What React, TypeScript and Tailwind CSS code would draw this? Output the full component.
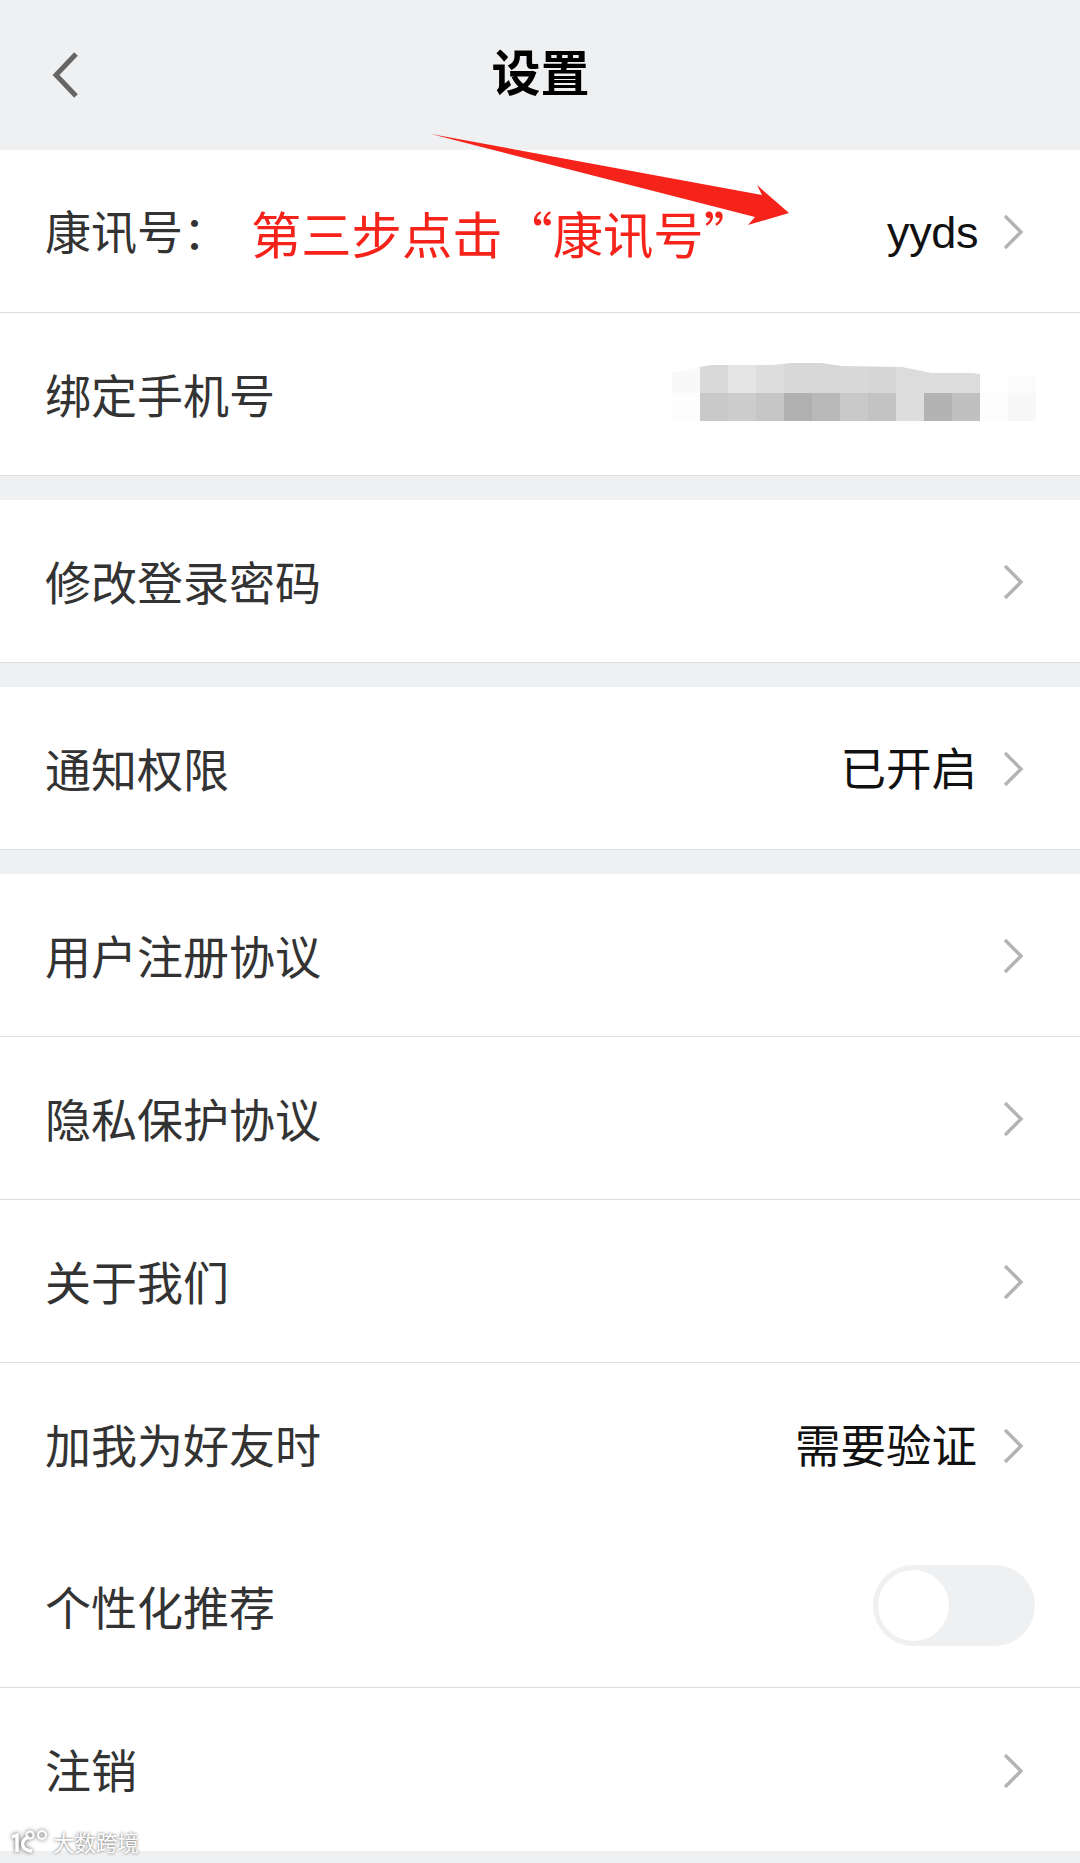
const chevron = (
  <svg className="mt-[2px] block h-[36px] w-[22px] shrink-0" viewBox="0 0 22 36" fill="none">
    <path d="M3 2 L19 18 L3 34" stroke="#b4b4b4" strokeWidth="3.4" strokeLinejoin="miter" />
  </svg>
);

function Row({ label, value, line = true }: { label: string; value?: string; line?: boolean }) {
  return (
    <div className={`flex h-[163px] items-center justify-between bg-white pl-[45px] pr-[56px] ${line ? 'border-b border-[#dcdde0]' : ''}`}>
      <span className="pb-[2px] text-[46px] text-[#333333]">{label}</span>
      <div className="flex items-center gap-[25px]">
        {value && <span className="pb-[3px] text-[45.5px] text-[#111111]">{value}</span>}
        {chevron}
      </div>
    </div>
  );
}

// 打码区域，两行色块
const mosaicTop = ['#f9f9f9', '#d9d9d9', '#e5e5e5', '#dddddd', '#d8d8d8', '#d8d8d8', '#d8d8d8', '#d6d6d6', '#dcdcdc', '#dcdcdc', '#dcdcdc', '#ffffff', '#fbfbfb'];
const mosaicBottom = ['#fdfdfd', '#c9c9c9', '#cccccc', '#c6c6c6', '#b0b0b0', '#b9b9b9', '#c9c9c9', '#c3c3c3', '#dddddd', '#b3b3b3', '#c0c0c0', '#fdfdfd', '#f7f7f7'];

function Mosaic() {
  return (
    <svg className="mb-[6px] block h-[60px] w-[364px]" viewBox="0 0 364 60">
      <defs>
        <clipPath id="mosaicEdge">
          <path d="M0 12 L28 6 L40 4 L100 4 L120 2 L150 2 L170 5 L230 6 L260 12 L300 12 L308 13 L340 16 L364 14 L364 60 L0 60 Z" />
        </clipPath>
      </defs>
      <g clipPath="url(#mosaicEdge)">
        {mosaicTop.map((c, i) => <rect key={i} x={i * 28} y="0" width="28" height="32" fill={c} />)}
        {mosaicBottom.map((c, i) => <rect key={i} x={i * 28} y="32" width="28" height="28" fill={c} />)}
      </g>
    </svg>
  );
}

export default function App() {
  return (
    <div className="relative h-[1863px] w-[1080px] overflow-hidden bg-[#eff0f2] font-['Noto_Sans_CJK_SC','Liberation_Sans',sans-serif]">
      <div className="relative flex h-[150px] items-center justify-center">
        <svg className="absolute left-[52px] top-[52px] h-[46px] w-[28px]" viewBox="0 0 28 46" fill="none">
          <path d="M24 2 L4 23 L24 44" stroke="#666666" strokeWidth="5" />
        </svg>
        <h1 className="pb-[10px] pl-[1px] text-[49px] font-bold text-black">设置</h1>
      </div>

      <div className="flex h-[163px] items-center justify-between border-b border-[#dcdde0] bg-white pl-[45px] pr-[56px]">
        <div className="flex items-center">
          <span className="pb-[3px] text-[46px] text-[#333333]">康讯号：</span>
          <span className="ml-[22px] pt-[4px] text-[50.3px] text-[#f5231a]">第三步点击“康讯号”</span>
        </div>
        <div className="flex items-center gap-[24px]">
          <span className="pt-[4px] font-['Liberation_Sans',sans-serif] text-[45px] tracking-[-0.4px] text-[#111111]">yyds</span>
          {chevron}
        </div>
      </div>

      <div className="flex h-[163px] items-center justify-between border-b border-[#dcdde0] bg-white pl-[45px] pr-[44px]">
        <span className="pb-[2px] text-[46px] text-[#333333]">绑定手机号</span>
        <Mosaic />
      </div>

      <div className="mt-[24px]"><Row label="修改登录密码" /></div>
      <div className="mt-[24px]"><Row label="通知权限" value="已开启" /></div>
      <div className="mt-[24px]">
        <Row label="用户注册协议" />
        <Row label="隐私保护协议" />
        <Row label="关于我们" />
        <Row label="加我为好友时" value="需要验证" line={false} />
        <div className="flex h-[162px] items-center justify-between border-b border-[#dcdde0] bg-white pl-[45px] pr-[45px]">
          <span className="pb-[2px] text-[46px] text-[#333333]">个性化推荐</span>
          <div className="mb-[3px] flex h-[81px] w-[162px] items-center rounded-full bg-[#eff0f2] pl-[5px]">
            <div className="size-[71px] rounded-full bg-white" />
          </div>
        </div>
        <Row label="注销" line={false} />
      </div>

      {/* 标注箭头 */}
      <svg className="pointer-events-none absolute left-[430px] top-[130px] h-[100px] w-[365px]" viewBox="430 130 365 100">
        <polygon points="431,134 762,195 757,185 789,213 748,225 755,217" fill="#f5231a" />
      </svg>

      {/* 水印 */}
      <div className="absolute left-[10px] top-[1830px] flex items-center gap-[3px]">
        <svg className="h-[23px] w-[40px] drop-shadow-[0_0_2px_#555555]" viewBox="0 0 40 23" fill="none" stroke="#ffffff" strokeWidth="3.5">
          <path d="M2 7 L7 5 L7 22" />
          <path d="M19 7 C10 10 10 20 22 21" />
          <circle cx="20" cy="5" r="3.5" strokeWidth="2" />
          <circle cx="32" cy="5" r="4" strokeWidth="2" />
        </svg>
        <span className="text-[21.5px] leading-none text-white [text-shadow:0_0_3px_#555555]">大数跨境</span>
      </div>
    </div>
  );
}
